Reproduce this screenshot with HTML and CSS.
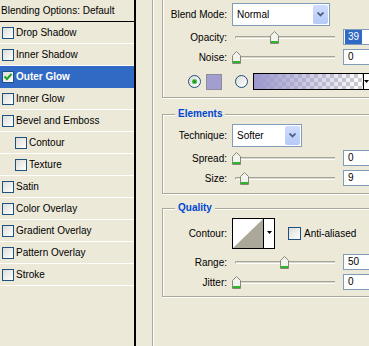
FILE: index.html
```html
<!DOCTYPE html>
<html lang="en">
<head>
    <meta charset="UTF-8">
    <meta name="viewport" content="width=device-width, initial-scale=1.0">
    <title>Layer Style - Outer Glow</title>
    <link rel="stylesheet" href="styles.css">
</head>
<body>
    <div class="window">
        <aside class="styles-list">
            <div class="list-head">Blending Options: Default</div>
            <ul>
                <li><span class="check"></span>Drop Shadow</li>
                <li><span class="check"></span>Inner Shadow</li>
                <li class="selected">
                    <span class="check">
                        <svg width="10" height="10" viewBox="0 0 10 10"><path d="M1.5 4.5 L4 7 L8.5 2" fill="none" stroke="#21A121" stroke-width="2"/></svg>
                    </span>Outer Glow
                </li>
                <li><span class="check"></span>Inner Glow</li>
                <li><span class="check"></span>Bevel and Emboss</li>
                <li class="sub"><span class="check"></span>Contour</li>
                <li class="sub"><span class="check"></span>Texture</li>
                <li><span class="check"></span>Satin</li>
                <li><span class="check"></span>Color Overlay</li>
                <li><span class="check"></span>Gradient Overlay</li>
                <li><span class="check"></span>Pattern Overlay</li>
                <li><span class="check"></span>Stroke</li>
            </ul>
        </aside>

        <main class="options">
            <!-- Structure (title scrolled out of view) -->
            <div class="group group-top">
                <div class="row row-select">
                    <span class="label">Blend Mode:</span>
                    <div class="select select-wide">
                        <span>Normal</span>
                        <span class="drop">
                            <svg width="7" height="5" viewBox="0 0 7 5"><path d="M0.5 0.5 L3.5 3.5 L6.5 0.5" fill="none" stroke="#4D6185" stroke-width="1.8"/></svg>
                        </span>
                    </div>
                </div>
                <div class="row row-slider first-slider">
                    <span class="label">Opacity:</span>
                    <div class="slider">
                        <span class="track"></span>
                        <svg class="thumb" style="left: 38px" width="9" height="13" viewBox="0 0 9 13"><path d="M0.5 4.5 L4.5 0.5 L8.5 4.5 V12.5 H0.5 Z" fill="#F3F3EE" stroke="#868679"/><rect x="1" y="10" width="7" height="2" fill="#2DB52D"/></svg>
                    </div>
                    <span class="num"><span class="sel">39</span></span>
                </div>
                <div class="row row-slider">
                    <span class="label">Noise:</span>
                    <div class="slider">
                        <span class="track"></span>
                        <svg class="thumb" style="left: 0px" width="9" height="13" viewBox="0 0 9 13"><path d="M0.5 4.5 L4.5 0.5 L8.5 4.5 V12.5 H0.5 Z" fill="#F3F3EE" stroke="#868679"/><rect x="1" y="10" width="7" height="2" fill="#2DB52D"/></svg>
                    </div>
                    <span class="num">0</span>
                </div>
                <div class="row row-color">
                    <svg class="radio" width="13" height="13" viewBox="0 0 13 13">
                        <defs><linearGradient id="rg1" x1="0" y1="0" x2="1" y2="1"><stop offset="0" stop-color="#DCDCD7"/><stop offset="1" stop-color="#fff"/></linearGradient></defs>
                        <circle cx="6.5" cy="6.5" r="6" fill="url(#rg1)" stroke="#1C5180"/>
                        <circle cx="6.5" cy="6.5" r="2.6" fill="#55C555"/>
                        <circle cx="6.5" cy="6.5" r="1.6" fill="#1E961E"/>
                    </svg>
                    <span class="swatch"></span>
                    <svg class="radio radio-gap" width="13" height="13" viewBox="0 0 13 13">
                        <defs><linearGradient id="rg2" x1="0" y1="0" x2="1" y2="1"><stop offset="0" stop-color="#DCDCD7"/><stop offset="1" stop-color="#fff"/></linearGradient></defs>
                        <circle cx="6.5" cy="6.5" r="6" fill="url(#rg2)" stroke="#1C5180"/>
                    </svg>
                    <div class="gradient-pick">
                        <span class="gradient"></span>
                        <span class="pick-arrow">
                            <svg width="5" height="3" viewBox="0 0 5 3"><path d="M0 0 H5 L2.5 3 Z" fill="#000"/></svg>
                        </span>
                    </div>
                </div>
            </div>

            <div class="group group-elements">
                <h3 class="group-title">Elements</h3>
                <div class="row row-select">
                    <span class="label">Technique:</span>
                    <div class="select select-narrow">
                        <span>Softer</span>
                        <span class="drop">
                            <svg width="7" height="5" viewBox="0 0 7 5"><path d="M0.5 0.5 L3.5 3.5 L6.5 0.5" fill="none" stroke="#4D6185" stroke-width="1.8"/></svg>
                        </span>
                    </div>
                </div>
                <div class="row row-slider first-slider">
                    <span class="label">Spread:</span>
                    <div class="slider">
                        <span class="track"></span>
                        <svg class="thumb" style="left: 0px" width="9" height="13" viewBox="0 0 9 13"><path d="M0.5 4.5 L4.5 0.5 L8.5 4.5 V12.5 H0.5 Z" fill="#F3F3EE" stroke="#868679"/><rect x="1" y="10" width="7" height="2" fill="#2DB52D"/></svg>
                    </div>
                    <span class="num">0</span>
                </div>
                <div class="row row-slider">
                    <span class="label">Size:</span>
                    <div class="slider">
                        <span class="track"></span>
                        <svg class="thumb" style="left: 8px" width="9" height="13" viewBox="0 0 9 13"><path d="M0.5 4.5 L4.5 0.5 L8.5 4.5 V12.5 H0.5 Z" fill="#F3F3EE" stroke="#868679"/><rect x="1" y="10" width="7" height="2" fill="#2DB52D"/></svg>
                    </div>
                    <span class="num">9</span>
                </div>
            </div>

            <div class="group group-quality">
                <h3 class="group-title">Quality</h3>
                <div class="row row-contour">
                    <span class="label">Contour:</span>
                    <div class="contour">
                        <svg width="30" height="29" viewBox="0 0 30 29"><rect width="30" height="29" fill="#fff"/><path d="M0 29 L30 0 V29 Z" fill="#ACA899"/></svg>
                        <span class="contour-arrow">
                            <svg width="5" height="3" viewBox="0 0 5 3"><path d="M0 0 H5 L2.5 3 Z" fill="#000"/></svg>
                        </span>
                    </div>
                    <span class="checkbox"></span>
                    <span class="check-label">Anti-aliased</span>
                </div>
                <div class="row row-slider range-row">
                    <span class="label">Range:</span>
                    <div class="slider">
                        <span class="track"></span>
                        <svg class="thumb" style="left: 48px" width="9" height="13" viewBox="0 0 9 13"><path d="M0.5 4.5 L4.5 0.5 L8.5 4.5 V12.5 H0.5 Z" fill="#F3F3EE" stroke="#868679"/><rect x="1" y="10" width="7" height="2" fill="#2DB52D"/></svg>
                    </div>
                    <span class="num">50</span>
                </div>
                <div class="row row-slider">
                    <span class="label">Jitter:</span>
                    <div class="slider">
                        <span class="track"></span>
                        <svg class="thumb" style="left: 0px" width="9" height="13" viewBox="0 0 9 13"><path d="M0.5 4.5 L4.5 0.5 L8.5 4.5 V12.5 H0.5 Z" fill="#F3F3EE" stroke="#868679"/><rect x="1" y="10" width="7" height="2" fill="#2DB52D"/></svg>
                    </div>
                    <span class="num">0</span>
                </div>
            </div>
        </main>
    </div>
</body>
</html>
```

FILE: styles.css
```css
* {
    margin: 0;
    padding: 0;
    box-sizing: border-box;
}

body {
    background-color: #ECE9D8;
    font-family: "Liberation Sans", Arial, sans-serif;
    font-size: 10px;
    color: #000;
    overflow: hidden;
}

.window {
    display: flex;
    height: 346px;
}

/* left list of effects */
.styles-list {
    width: 136px;
    flex-shrink: 0;
    border-right: 2px solid #000;
}

.list-head {
    height: 22px;
    line-height: 21px;
    padding-left: 1px;
    border-bottom: 1px solid #000;
}

.styles-list ul {
    list-style: none;
}

.styles-list li {
    height: 22px;
    display: flex;
    align-items: center;
    gap: 2px;
    padding-left: 2px;
    border-bottom: 1px solid #fff;
}

.styles-list li.sub {
    padding-left: 15px;
}

.styles-list li.selected {
    background-color: #316AC5;
    border-bottom-color: #316AC5;
    color: #fff;
    font-weight: bold;
}

.check,
.checkbox {
    width: 12px;
    height: 12px;
    border: 1px solid #1C5180;
    background: linear-gradient(135deg, #DCDCD7, #fff);
    display: flex;
    align-items: center;
    justify-content: center;
    flex-shrink: 0;
}

/* right options panel, its right side is cut by the window edge */
.options {
    margin-left: 16px;
    padding-left: 9px;
    border-left: 1px solid #ACA899;
    box-shadow: inset 1px 0 0 #fff;
    width: 217px;
    flex-shrink: 0;
}

.group {
    width: 207px;
    border: 1px solid #ACA899;
    border-right: none;
    box-shadow: inset 1px 1px 0 #fff, 0 1px 0 #fff;
}

.group-top {
    margin-top: -8px;
    padding: 10px 0 7px;
}

.group-elements {
    margin-top: 16px;
    padding-bottom: 7px;
}

.group-quality {
    margin-top: 14px;
    padding-bottom: 6px;
}

.group-title {
    display: table;
    margin: -7px 0 0 12px;
    padding: 0 3px;
    line-height: 12px;
    font-size: 10px;
    color: #0046D5;
    background-color: #ECE9D8;
}

.row {
    display: flex;
    align-items: center;
}

.label {
    width: 64px;
    margin-right: 5px;
    text-align: right;
    flex-shrink: 0;
}

.row-select {
    height: 23px;
}

.group-elements .row-select,
.row-contour {
    margin-top: 4px;
}

.row-slider {
    height: 16px;
    margin-top: 4px;
}

.row-slider.first-slider {
    margin-top: 3px;
}

.row-slider.range-row {
    margin-top: 5px;
}

.select {
    height: 23px;
    padding: 1px;
    border: 1px solid #7F9DB9;
    background-color: #fff;
    display: flex;
    align-items: center;
    justify-content: space-between;
}

.select span:first-child {
    padding-left: 3px;
}

.select-wide {
    width: 98px;
}

.select-narrow {
    width: 70px;
}

.drop {
    width: 15px;
    height: 19px;
    border-radius: 2px;
    background: linear-gradient(#CFDCFD, #B6CAF7);
    display: flex;
    align-items: center;
    justify-content: center;
}

.slider {
    position: relative;
    width: 106px;
    height: 16px;
    display: flex;
    align-items: center;
}

.track {
    margin-left: 3px;
    width: 100px;
    height: 3px;
    border-top: 1px solid #A5A39A;
    border-left: 1px solid #A5A39A;
    border-bottom: 1px solid #fff;
    border-radius: 2px 0 0 2px;
    background-color: #DCD8C8;
}

.thumb {
    position: absolute;
    top: 2px;
}

.num {
    margin-left: 5px;
    width: 26px;
    height: 16px;
    line-height: 14px;
    padding-left: 4px;
    border: 1px solid #7F9DB9;
    border-right: none;
    background-color: #fff;
    flex-shrink: 0;
}

.num .sel {
    display: inline-block;
    margin-left: -3px;
    padding: 0 3px;
    background-color: #316AC5;
    color: #fff;
}

.row-color {
    height: 17px;
    margin-top: 8px;
    padding-left: 25px;
}

.swatch {
    margin-left: 5px;
    width: 16px;
    height: 16px;
    border: 1px solid #8D8C99;
    background-color: #A29ED0;
}

.radio-gap {
    margin-left: 13px;
}

.gradient-pick {
    margin-left: 5px;
    height: 17px;
    border: 1px solid #000;
    border-right: none;
    display: flex;
}

.gradient {
    width: 109px;
    background:
        linear-gradient(90deg, #9C98CE, rgba(156, 152, 206, 0.55) 45%, rgba(156, 152, 206, 0)),
        repeating-conic-gradient(#CDCDCD 0 25%, #fff 0 50%) 0 0 / 8px 8px;
}

.pick-arrow {
    width: 6px;
    border-left: 1px solid #000;
    background-color: #fff;
    display: flex;
    align-items: center;
}

.row-contour {
    height: 31px;
}

.contour {
    width: 43px;
    height: 31px;
    border: 1px solid #000;
    display: flex;
}

.contour-arrow {
    width: 11px;
    border-left: 1px solid #000;
    background-color: #fff;
    display: flex;
    justify-content: center;
    padding-top: 12px;
}

.checkbox {
    width: 13px;
    height: 13px;
    margin-left: 13px;
}

.check-label {
    margin-left: 3px;
}
```
